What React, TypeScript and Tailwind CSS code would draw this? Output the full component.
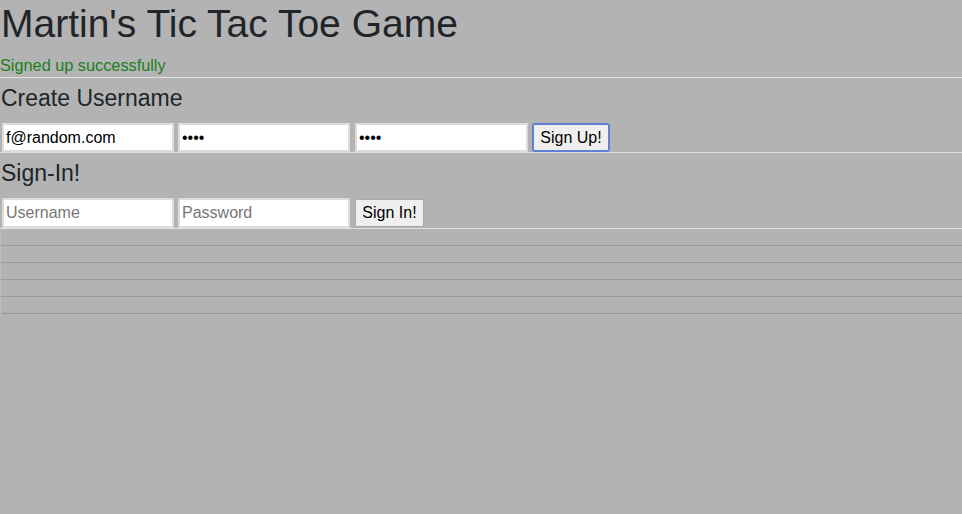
import React from "react"

const inputCls =
  "h-[29px] w-[172px] bg-white border-2 border-[#dcdcdc] px-[2px] text-[16px] text-black placeholder:text-[#767676] outline-none"

const App: React.FC = () => {
  const rows = [0, 1, 2, 3, 4]
  return (
    <div
      className="min-h-[514px] w-[962px] bg-[#b3b3b3] text-[#212529]"
      style={{ fontFamily: "'Liberation Sans', Arial, sans-serif" }}
    >
      <h1 className="text-[39px] leading-[48px] font-normal pl-px">Martin's Tic Tac Toe Game</h1>
      <p className="mt-[7px] text-[16.3px] leading-[20px] text-[#1b7f1b]">Signed up successfully</p>
      <hr className="mt-[2px] border-0 border-t border-[#e2e2e2]" />

      <section>
        <h4 className="mt-[6px] text-[23px] leading-[28px] pl-px">Create Username</h4>
        <div className="mt-[11px] flex items-center gap-[4px] pl-[2px]">
          <input className={inputCls} defaultValue="f@random.com" />
          <input className={inputCls} type="password" defaultValue="1234" />
          <input className={inputCls + " ml-px w-[173px]"} type="password" defaultValue="1234" />
          <button className="h-[29px] w-[78px] rounded-[3px] border-2 border-[#5f82d4] bg-[#efefef] text-[16px] text-black">
            Sign Up!
          </button>
        </div>
      </section>
      <hr className="border-0 border-t border-[#e2e2e2]" />

      <section>
        <h4 className="mt-[6px] text-[23px] leading-[28px] pl-px">Sign-In!</h4>
        <div className="mt-[11px] flex items-center gap-[4px] pl-[2px]">
          <input className={inputCls + " h-[30px]"} placeholder="Username" />
          <input className={inputCls + " h-[30px]"} type="password" placeholder="Password" />
          <button className="ml-px h-[28px] w-[69px] rounded-[2px] border border-[#a8a8a8] bg-[#efefef] text-[16px] text-black">
            Sign In!
          </button>
        </div>
      </section>
      <hr className="border-0 border-t border-[#e2e2e2]" />

      <div className="border-l border-[#bdbdbd]">
        {rows.map((r) => (
          <div key={r} className="h-[17px] border-b border-[#9a9a9a]" />
        ))}
      </div>
    </div>
  )
}

export default App
